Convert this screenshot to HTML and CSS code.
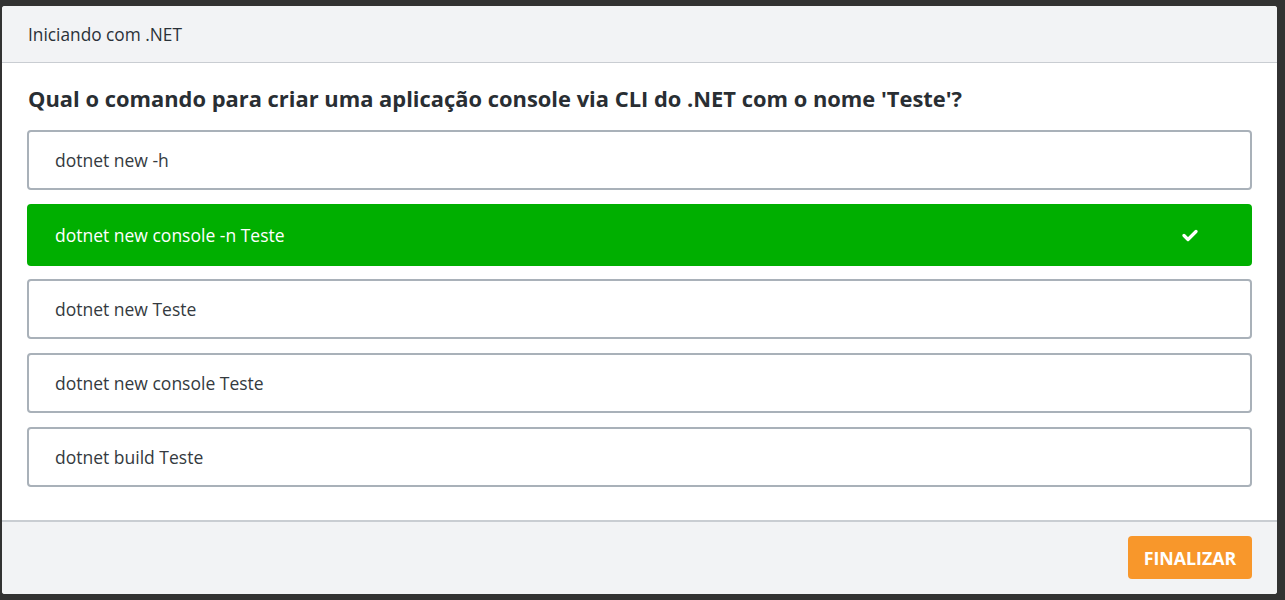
FILE: index.html
```html
<!DOCTYPE html>
<html lang="pt">
<head>
<meta charset="utf-8">
<title>Iniciando com .NET</title>
<link rel="stylesheet" href="styles.css">
</head>
<body>
<div class="modal">
  <div class="modal-header">Iniciando com .NET</div>
  <div class="modal-body">
    <h2 class="question">Qual o comando para criar uma aplicação console via CLI do .NET com o nome 'Teste'?</h2>
    <ul class="options">
      <li class="option">dotnet new -h</li>
      <li class="option correct"><span>dotnet new console -n Teste</span>
        <svg class="check" width="16" height="13" viewBox="0 0 16 13"><path d="M2 6.5 L6 10.5 L14 2.5" fill="none" stroke="#fff" stroke-width="3.2" stroke-linecap="round" stroke-linejoin="round"/></svg>
      </li>
      <li class="option">dotnet new Teste</li>
      <li class="option">dotnet new console Teste</li>
      <li class="option">dotnet build Teste</li>
    </ul>
  </div>
  <div class="modal-footer">
    <button class="btn-finish">FINALIZAR</button>
  </div>
</div>
</body>
</html>
```
FILE: styles.css
```css
* { box-sizing: border-box; }
html, body { margin: 0; padding: 0; }
body {
  background: #323232;
  font-family: "Open Sans", "Noto Sans", sans-serif;
  color: #333a40;
  padding: 6px 8px 6px 2px;
  height: 600px;
}
.modal {
  background: #fff;
  border-radius: 3px;
  overflow: hidden;
  height: 588px;
  display: flex;
  flex-direction: column;
}
.modal-header {
  background: #f2f3f5;
  height: 57px;
  border-bottom: 1px solid #c9cdd2;
  padding: 0 26px;
  display: flex;
  align-items: center;
  font-size: 17.3px;
  color: #2a3138;
}
.modal-body {
  flex: 1;
  padding: 21px 25px 0 25px;
}
.question {
  margin: 0 0 16px 1px;
  font-size: 21.9px;
  line-height: 30px;
  font-weight: 700;
  color: #292e33;
}
.options {
  list-style: none;
  margin: 0;
  padding: 0;
  display: flex;
  flex-direction: column;
  gap: 14px;
}
.option {
  height: 60px;
  border: 2px solid #a9b1b9;
  border-radius: 4px;
  padding: 0 26px;
  display: flex;
  align-items: center;
  justify-content: space-between;
  font-size: 17.5px;
  color: #343a40;
}
.option.correct {
  background: #00af00;
  border-color: #00af00;
  color: #fff;
  height: 62px;
  margin-bottom: -1px;
}
.check { margin-right: 26px; }
.modal-footer {
  background: #f2f3f5;
  border-top: 2px solid #c9cdd2;
  height: 74px;
  display: flex;
  justify-content: flex-end;
  align-items: flex-start;
  padding: 14px 25px 0 0;
}
.btn-finish {
  background: #f8972b;
  color: #fff;
  border: none;
  border-radius: 4px;
  height: 43px;
  width: 124px;
  font-family: "Open Sans", "Noto Sans", sans-serif;
  font-weight: 700;
  font-size: 17.8px;
  padding: 0;
}
```
